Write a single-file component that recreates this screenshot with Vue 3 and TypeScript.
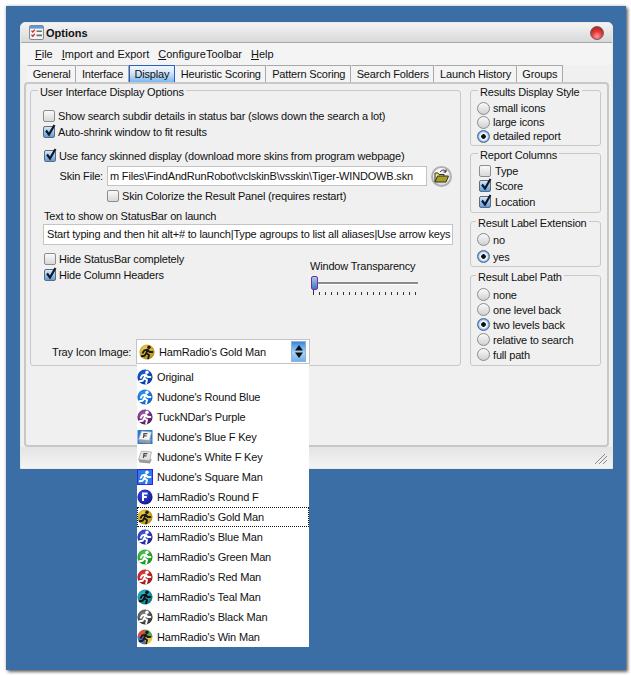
<script setup lang="ts">
import { h } from 'vue'

type TrayItem = {
  label: string
  kind: 'man' | 'f' | 'key' | 'square' | 'win'
  light: string
  dark: string
  fig?: string
}

const gold: TrayItem = { label: "HamRadio's Gold Man", kind: 'man', light: '#f7d64a', dark: '#b08a10', fig: '#1a1a1a' }

const trayItems: TrayItem[] = [
  { label: 'Original', kind: 'man', light: '#1a5fd0', dark: '#0a3a9c', fig: '#ffffff' },
  { label: "Nudone's Round Blue", kind: 'man', light: '#2f9bf5', dark: '#0d5cc8', fig: '#ffffff' },
  { label: "TuckNDar's Purple", kind: 'man', light: '#b060b8', dark: '#4c1458', fig: '#ffffff' },
  { label: "Nudone's Blue F Key", kind: 'key', light: '#f4f4f4', dark: '#2a7ad8' },
  { label: "Nudone's White F Key", kind: 'key', light: '#e4e4e4', dark: '#ffffff' },
  { label: "Nudone's Square Man", kind: 'square', light: '#2a7ce8', dark: '#3a20e0', fig: '#ffffff' },
  { label: "HamRadio's Round F", kind: 'f', light: '#3a4ce0', dark: '#12188c', fig: '#ffffff' },
  gold,
  { label: "HamRadio's Blue Man", kind: 'man', light: '#4a5ce0', dark: '#1a2090', fig: '#ffffff' },
  { label: "HamRadio's Green Man", kind: 'man', light: '#4cd050', dark: '#16881c', fig: '#ffffff' },
  { label: "HamRadio's Red Man", kind: 'man', light: '#e8403c', dark: '#981214', fig: '#ffffff' },
  { label: "HamRadio's Teal Man", kind: 'man', light: '#28c0d0', dark: '#0c7484', fig: '#101010' },
  { label: "HamRadio's Black Man", kind: 'man', light: '#8a8a8a', dark: '#2c2c2c', fig: '#ffffff' },
  { label: "HamRadio's Win Man", kind: 'win', light: '#e0e0e0', dark: '#707070', fig: '#ffffff' }
]

const tabs = [
  'General',
  'Interface',
  'Display',
  'Heuristic Scoring',
  'Pattern Scoring',
  'Search Folders',
  'Launch History',
  'Groups'
]

const styleOptions = [
  { label: 'small icons', on: false },
  { label: 'large icons', on: false },
  { label: 'detailed report', on: true }
]
const columnOptions = [
  { label: 'Type', on: false },
  { label: 'Score', on: true },
  { label: 'Location', on: true }
]
const extOptions = [
  { label: 'no', on: false },
  { label: 'yes', on: true }
]
const pathOptions = [
  { label: 'none', on: false },
  { label: 'one level back', on: false },
  { label: 'two levels back', on: true },
  { label: 'relative to search', on: false },
  { label: 'full path', on: false }
]

const ticks = Array.from({ length: 18 }, (_, i) => i)

// little running man, shared by the round and square tray icons
const manParts = (color: string) => [
  h('circle', { cx: 10, cy: 3.2, r: 1.7, fill: color }),
  h('path', {
    d: 'M8.8 5.4 7.2 9.2 10 11 9.2 14.4M7.2 9.2 5.6 11.8 2.6 12.2M8.2 5.8 5.2 6.4 3.8 8.8M8.8 6 10.6 8 13.4 8',
    fill: 'none',
    stroke: color,
    'stroke-width': 1.9,
    'stroke-linecap': 'round',
    'stroke-linejoin': 'round'
  })
]

const TrayIcon = (props: { item: TrayItem; uid: string }) => {
  const { item, uid } = props
  const grad = h('defs', [
    h('radialGradient', { id: uid, cx: '40%', cy: '35%', r: '70%' }, [
      h('stop', { offset: '0%', 'stop-color': item.light }),
      h('stop', { offset: '100%', 'stop-color': item.dark })
    ])
  ])
  const svg = (kids: unknown[]) =>
    h('svg', { class: 'tray-svg', width: 16, height: 16, viewBox: '0 0 16 16' }, kids as never)

  if (item.kind === 'key') {
    return svg([
      h('rect', { x: 0.5, y: 1, width: 15, height: 14, fill: item.dark }),
      h('path', { d: 'M1.5 10.5 12.5 11.5 14 9 14.5 11 13 14.5 2.5 13.5Z', fill: '#9a9a9a' }),
      h('path', { d: 'M4.5 2 14.5 3 12.5 11.5 1.5 10.5Z', fill: item.light, stroke: '#a0a0a0', 'stroke-width': 0.7 }),
      h('path', { d: 'M6.4 9 7 4.6H10.4M6.7 6.8H9.6', fill: 'none', stroke: '#4a4a4a', 'stroke-width': 1.2 })
    ])
  }
  if (item.kind === 'square') {
    return svg([
      h('rect', { x: 0.5, y: 0.5, width: 15, height: 15, fill: item.light, stroke: item.dark }),
      ...manParts(item.fig ?? '#fff')
    ])
  }
  if (item.kind === 'f') {
    return svg([
      grad,
      h('circle', { cx: 8, cy: 8, r: 7.6, fill: `url(#${uid})` }),
      h('path', { d: 'M6 12V4.5H10.6M6 8H9.8', fill: 'none', stroke: item.fig, 'stroke-width': 2 })
    ])
  }
  if (item.kind === 'win') {
    return svg([
      h('path', { d: 'M8 .4A7.6 7.6 0 0 0 .4 8H8Z', fill: '#d85040' }),
      h('path', { d: 'M8 .4A7.6 7.6 0 0 1 15.6 8H8Z', fill: '#58a858' }),
      h('path', { d: 'M8 15.6A7.6 7.6 0 0 1 .4 8H8Z', fill: '#4a70c8' }),
      h('path', { d: 'M8 15.6A7.6 7.6 0 0 0 15.6 8H8Z', fill: '#e8c83c' }),
      ...manParts('#1c1c1c')
    ])
  }
  return svg([
    grad,
    h('circle', { cx: 8, cy: 8, r: 7.6, fill: `url(#${uid})` }),
    ...manParts(item.fig ?? '#fff')
  ])
}
TrayIcon.props = ['item', 'uid']
</script>

<template>
  <div class="page">
    <div class="desktop">
      <div class="window">
        <div class="titlebar">
          <svg class="app-icon" width="15" height="15" viewBox="0 0 15 15">
            <rect x="0.5" y="0.5" width="14" height="14" rx="1.5" fill="#f4f4f4" stroke="#7a8a9a" />
            <rect x="1" y="1" width="13" height="2.6" fill="#5a9ad8" />
            <path d="M2.5 5.6 3.8 7 5.8 4.6M2.5 9.8 3.8 11.2 5.8 8.8" fill="none" stroke="#d02820" stroke-width="1.3" />
            <path d="M7.5 6.2H13M7.5 10.4H13" stroke="#707070" stroke-width="1.6" />
          </svg>
          <span class="title">Options</span>
          <span class="close-btn"></span>
        </div>

        <div class="menubar">
          <span class="menu-item"><u>F</u>ile</span>
          <span class="menu-item"><u>I</u>mport and Export</span>
          <span class="menu-item"><u>C</u>onfigureToolbar</span>
          <span class="menu-item"><u>H</u>elp</span>
        </div>

        <div class="tabs">
          <span
            v-for="tab in tabs"
            :key="tab"
            :class="['tab', { active: tab === 'Display' }]"
          >{{ tab }}</span>
        </div>

        <div class="tab-page">
          <div class="group display-group">
            <span class="group-title">User Interface Display Options</span>

            <label class="check-row first-row"><span class="check"></span>Show search subdir details in status bar (slows down the search a lot)</label>
            <label class="check-row"><span class="check on"><svg viewBox="0 0 14 14"><path d="M3 6.5 6 10.5 11.5 1" /></svg></span>Auto-shrink window to fit results</label>

            <label class="check-row fancy-row"><span class="check on"><svg viewBox="0 0 14 14"><path d="M3 6.5 6 10.5 11.5 1" /></svg></span>Use fancy skinned display (download more skins from program webpage)</label>

            <div class="skin-row">
              <span class="skin-label">Skin File:</span>
              <div class="textbox skin-box">m Files\FindAndRunRobot\vclskinB\vsskin\Tiger-WINDOWB.skn</div>
              <span class="folder-btn">
                <svg width="15" height="14" viewBox="0 0 15 14">
                  <path d="M1 13V4H4L5 5.5H10V7" fill="#f4ec70" stroke="#333" />
                  <path d="M1 13 3.5 7H14.5L12 13Z" fill="#a8a020" stroke="#333" />
                  <path d="M6 3C8 .5 10 .5 12 2.5M12 .5V3H9.5" fill="none" stroke="#222" />
                </svg>
              </span>
            </div>

            <label class="check-row colorize-row"><span class="check"></span>Skin Colorize the Result Panel (requires restart)</label>

            <div class="status-label">Text to show on StatusBar on launch</div>
            <div class="textbox status-box">Start typing and then hit alt+# to launch|Type agroups to list all aliases|Use arrow keys</div>

            <div class="hide-row">
              <div class="hide-checks">
                <label class="check-row"><span class="check"></span>Hide StatusBar completely</label>
                <label class="check-row"><span class="check on"><svg viewBox="0 0 14 14"><path d="M3 6.5 6 10.5 11.5 1" /></svg></span>Hide Column Headers</label>
              </div>
              <div class="transparency">
                <div class="transparency-label">Window Transparency</div>
                <div class="slider">
                  <span class="slider-thumb"></span>
                </div>
                <div class="slider-ticks">
                  <span v-for="t in ticks" :key="t" :class="['tick', { long: t === 0 }]"></span>
                </div>
              </div>
            </div>

            <div class="tray-row">
              <span class="tray-label">Tray Icon Image:</span>
              <div class="combo">
                <TrayIcon :item="gold" uid="combo-icon" />
                <span class="combo-text">{{ gold.label }}</span>
                <span class="combo-btn">
                  <svg width="10" height="15" viewBox="0 0 10 15">
                    <path d="M5 1 9 6.5H1ZM5 14 1 8.5H9Z" fill="#111" />
                  </svg>
                </span>
                <ul class="dropdown">
                  <li
                    v-for="(item, i) in trayItems"
                    :key="item.label"
                    :class="['dropdown-row', { current: item === gold }]"
                  >
                    <TrayIcon :item="item" :uid="`tray-${i}`" />
                    <span>{{ item.label }}</span>
                  </li>
                </ul>
              </div>
            </div>
          </div>

          <div class="side">
            <div class="group style-group">
              <span class="group-title">Results Display Style</span>
              <label v-for="o in styleOptions" :key="o.label" class="radio-row">
                <span :class="['radio', { on: o.on }]"></span>{{ o.label }}
              </label>
            </div>
            <div class="group columns-group">
              <span class="group-title">Report Columns</span>
              <label v-for="o in columnOptions" :key="o.label" class="col-row">
                <span :class="['check', { on: o.on }]"><svg v-if="o.on" viewBox="0 0 14 14"><path d="M3 6.5 6 10.5 11.5 1" /></svg></span>{{ o.label }}
              </label>
            </div>
            <div class="group ext-group">
              <span class="group-title">Result Label Extension</span>
              <label v-for="o in extOptions" :key="o.label" class="radio-row">
                <span :class="['radio', { on: o.on }]"></span>{{ o.label }}
              </label>
            </div>
            <div class="group path-group">
              <span class="group-title">Result Label Path</span>
              <label v-for="o in pathOptions" :key="o.label" class="radio-row">
                <span :class="['radio', { on: o.on }]"></span>{{ o.label }}
              </label>
            </div>
          </div>
        </div>

        <div class="statusbar">
          <svg class="grip" width="14" height="12" viewBox="0 0 14 12">
            <path d="M1 11 11 1M5 11 13 3M9 11 13 7" stroke="#8a8a8a" fill="none" />
          </svg>
        </div>
      </div>
    </div>
  </div>
</template>

<style>
html,
body {
  margin: 0;
  background: #ffffff;
}
</style>

<style scoped>
.page {
  width: 631px;
  height: 675px;
  box-sizing: border-box;
  padding: 6px 5px 5px 6px;
  background: #ffffff;
  overflow: hidden;
  font-family: "Liberation Sans", Arial, sans-serif;
  font-size: 11px;
  letter-spacing: -0.18px;
  color: #111;
}

.desktop {
  height: 664px;
  box-sizing: border-box;
  padding: 16px 13px 0 14px;
  background: #3b6ea5;
  box-shadow: 2px 2px 3px rgba(0, 0, 0, 0.55), 0 0 3px rgba(0, 0, 0, 0.25);
}

.window {
  height: 447px;
  box-sizing: border-box;
  display: flex;
  flex-direction: column;
  background: #f0f0f0;
  border-radius: 5px 5px 0 0;
  border: 1px solid #e8e8e8;
}

.titlebar {
  height: 19px;
  flex-shrink: 0;
  display: flex;
  align-items: center;
  padding: 0 8px;
  border-bottom: 1px solid #a8a8a8;
  border-radius: 5px 5px 0 0;
  background: linear-gradient(#f4f4f4, #d8d8d8);
}

.app-icon {
  flex-shrink: 0;
}

.title {
  margin-left: 2px;
  font-weight: bold;
  font-size: 11px;
  letter-spacing: 0;
  color: #111;
}

.close-btn {
  margin-left: auto;
  width: 14px;
  height: 14px;
  box-sizing: border-box;
  border-radius: 50%;
  border: 1px solid #7a5a5a;
  background: radial-gradient(circle at 50% 78%, #ff9a9a 0, #e03a3a 45%, #a01818 100%);
}

.menubar {
  height: 22px;
  display: flex;
  align-items: center;
  padding-left: 14px;
  gap: 9px;
  background: #f4f4f4;
  letter-spacing: 0;
}

.menu-item {
  white-space: nowrap;
}

.tabs {
  display: flex;
  height: 17px;
  padding-left: 6px;
  background: #f0f0f0;
}

.tab {
  height: 17px;
  box-sizing: border-box;
  padding: 0 4.7px;
  line-height: 16px;
  white-space: nowrap;
  border: 1px solid #a8a8a8;
  border-bottom: none;
  border-left-color: transparent;
  background: #f4f4f4;
}

.tab.active {
  border: 1px solid #2a5ec0;
  border-bottom: none;
  background: linear-gradient(#f0f6fc 0, #d8e8f8 40%, #7ab8f0 100%);
}

.tab-page {
  flex: none;
  height: 365px;
  margin: 0 3px;
  display: flex;
  gap: 9px;
  box-sizing: border-box;
  padding: 6px 6px 0 4px;
  border: 2px solid #c8c8c8;
  border-radius: 4px;
  background: #f0f0f0;
}

.group {
  position: relative;
  box-sizing: border-box;
  border: 1px solid #c8c8c8;
  border-radius: 3px;
}

.group-title {
  position: absolute;
  top: -6px;
  left: 7px;
  padding: 0 2px;
  line-height: 14px;
  background: #f0f0f0;
  white-space: nowrap;
}

.ext-group .group-title,
.path-group .group-title {
  left: 5px;
}

.display-group {
  width: 432px;
  height: 276px;
  display: flex;
  flex-direction: column;
  padding: 0 0 0 12px;
}

.check-row {
  display: flex;
  align-items: center;
  height: 16px;
  white-space: nowrap;
}

.first-row {
  margin-top: 17px;
}

.fancy-row {
  margin: 8px 0 0 1px;
}

.colorize-row {
  margin: 2px 0 0 64px;
}

.check {
  flex-shrink: 0;
  position: relative;
  width: 12px;
  height: 12px;
  margin-right: 3px;
  box-sizing: border-box;
  border: 1px solid #8c8c8c;
  border-radius: 2px;
  background: linear-gradient(#fafafa, #d8d8d8);
}

.check.on {
  border-color: #606a78;
  background: linear-gradient(#d8e8f8, #5c9ce0);
}

.check svg {
  position: absolute;
  left: -1px;
  top: -3px;
  width: 14px;
  height: 14px;
  overflow: visible;
}

.check path {
  fill: none;
  stroke: #101828;
  stroke-width: 2.2;
}

.skin-row {
  display: flex;
  align-items: center;
  margin-top: 2px;
  height: 20px;
}

.skin-label {
  width: 64px;
  text-align: right;
  padding-right: 4px;
  box-sizing: border-box;
  flex-shrink: 0;
}

.textbox {
  box-sizing: border-box;
  border: 1px solid #c4c4c4;
  background: #ffffff;
  white-space: nowrap;
  overflow: hidden;
}

.skin-box {
  width: 320px;
  height: 20px;
  line-height: 18px;
  padding-left: 2px;
}

.folder-btn {
  width: 21px;
  height: 21px;
  margin-left: 4px;
  box-sizing: border-box;
  display: flex;
  align-items: center;
  justify-content: center;
  border: 2px solid #b0b0b0;
  border-radius: 50%;
  background: linear-gradient(#fafafa, #dcdcdc);
}

.status-label {
  height: 16px;
  line-height: 16px;
  margin: 4px 0 0 1px;
}

.status-box {
  width: 410px;
  height: 21px;
  line-height: 19px;
  padding-left: 3px;
}

.hide-row {
  display: flex;
  margin-top: 6px;
}

.hide-checks {
  width: 267px;
  padding-left: 1px;
  box-sizing: border-box;
  flex-shrink: 0;
}

.transparency {
  margin-top: 8px;
  width: 108px;
}

.transparency-label {
  height: 14px;
  line-height: 14px;
  white-space: nowrap;
}

.slider {
  position: relative;
  height: 2px;
  margin: 9px 0 0 1px;
  background: #8c8c8c;
  border-bottom: 1px solid #ffffff;
}

.slider-thumb {
  position: absolute;
  left: 0;
  top: -6px;
  width: 7px;
  height: 14px;
  border-radius: 2px;
  border: 1px solid #7a2aa8;
  box-sizing: border-box;
  background: linear-gradient(#a8c8e8, #3a78c0);
}

.slider-ticks {
  display: flex;
  justify-content: space-between;
  align-items: flex-start;
  margin-top: 7px;
  padding: 0 2px 0 3px;
}

.tick {
  width: 1px;
  height: 3px;
  background: #333;
}

.tick.long {
  height: 5px;
  margin-top: -2px;
}

.tray-row {
  margin-top: auto;
  margin-bottom: 1px;
  display: flex;
  align-items: center;
}

.tray-label {
  margin-left: 9px;
  width: 84px;
  white-space: nowrap;
  flex-shrink: 0;
}

.combo {
  position: relative;
  box-sizing: border-box;
  width: 174px;
  height: 25px;
  display: flex;
  align-items: center;
  padding: 0 3px 0 2px;
  border: 1px solid #c4c4c4;
  background: #ffffff;
}

.combo-text {
  margin-left: 4px;
  white-space: nowrap;
}

.combo-btn {
  margin-left: auto;
  width: 15px;
  height: 21px;
  display: flex;
  align-items: center;
  justify-content: center;
  background: linear-gradient(#3a86e0, #a8d4f4 55%, #70b0ec);
  border: 1px solid #8cb4dc;
  box-sizing: border-box;
}

.dropdown {
  position: absolute;
  z-index: 5;
  left: 0;
  top: 24px;
  width: 172px;
  margin: 0;
  padding: 3px 0 0;
  list-style: none;
  background: #ffffff;
}

.dropdown-row {
  display: flex;
  align-items: center;
  box-sizing: border-box;
  height: 20px;
  gap: 4px;
  white-space: nowrap;
}

.dropdown-row.current {
  outline: 1px dotted #111;
  outline-offset: -1px;
}

.side {
  width: 131px;
  display: flex;
  flex-direction: column;
  flex-shrink: 0;
}

.radio-row,
.col-row {
  display: flex;
  align-items: center;
  white-space: nowrap;
  margin-left: 6px;
}

.style-group {
  height: 56px;
  padding-top: 10px;
}

.style-group .radio-row {
  height: 14px;
}

.columns-group {
  height: 60px;
  margin-top: 7px;
  padding-top: 9px;
}

.col-row {
  height: 15.5px;
}

.col-row .check {
  margin-right: 4px;
  margin-left: 2px;
}

.ext-group {
  height: 46px;
  margin-top: 8px;
  padding-top: 9px;
}

.ext-group .radio-row {
  height: 17px;
}

.path-group {
  height: 91px;
  margin-top: 8px;
  padding-top: 11px;
}

.path-group .radio-row {
  height: 15px;
}

.radio {
  flex-shrink: 0;
  position: relative;
  width: 13px;
  height: 13px;
  margin-right: 3px;
  box-sizing: border-box;
  border: 1px solid #8c8c8c;
  border-radius: 50%;
  background: linear-gradient(#fafafa, #d0d0d0);
}

.radio.on {
  border-color: #5a6a80;
  background: radial-gradient(circle, #111 0, #111 2px, #ffffff 2.6px, #d0e4f8 4px, #3a84e0 6px);
}

.statusbar {
  flex: 1;
  display: flex;
  align-items: flex-end;
  justify-content: flex-end;
  padding: 0 4px 3px 0;
  background: linear-gradient(#e4e4e4, #f4f4f4);
}

.tray-svg {
  flex-shrink: 0;
}
</style>
